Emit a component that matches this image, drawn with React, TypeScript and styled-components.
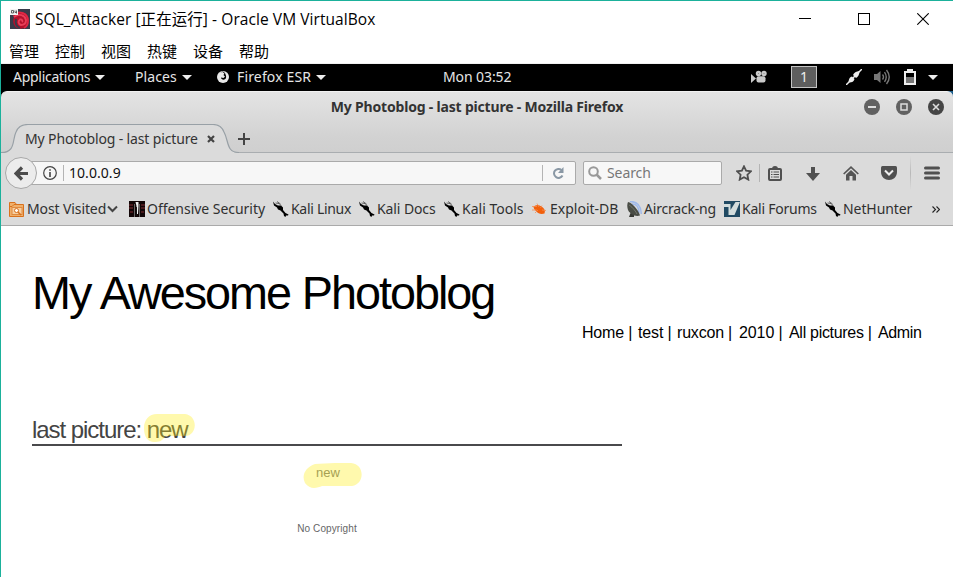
import React from "react";
import styled, { createGlobalStyle } from "styled-components";

const Global = createGlobalStyle`
  * { box-sizing: border-box; }
  html, body { margin: 0; padding: 0; background: #fff; overflow: hidden; }
  svg { display: block; flex: none; }
`;

const Window = styled.div`
  width: 953px;
  height: 577px;
  border-top: 1px solid #1bb19b;
  border-left: 1px solid #1bb19b;
  background: #fff;
  display: flex;
  flex-direction: column;
  overflow: hidden;
`;

const TitleBar = styled.header`
  height: 36px;
  flex: none;
  display: flex;
  align-items: center;
  padding: 0 24px 0 9px;
`;

const WindowTitle = styled.div`
  flex: 1;
  margin-left: 5px;
  font: 15.5px/20px "Open Sans", "Noto Sans CJK SC", sans-serif;
  letter-spacing: 0.07px;
  color: #000;
  white-space: nowrap;
`;

const WindowControls = styled.div`
  display: flex;
  gap: 46px;
`;

const MenuBar = styled.nav`
  height: 27px;
  flex: none;
  display: flex;
  align-items: center;
  padding: 2px 0 0 8px;
  gap: 16px;
  font: 15px/20px "Noto Sans CJK SC", sans-serif;
  color: #000;
  border-bottom: 1px solid #f0f0f0;
`;

const Panel = styled.div`
  height: 27px;
  flex: none;
  display: flex;
  align-items: center;
  padding-bottom: 1px;
  background: #000;
  color: #e6e6e6;
`;

const Label = styled.span<{ $w: number; $ls?: number; $ml?: number }>`
  flex: none;
  width: ${(p) => p.$w}px;
  margin-left: ${(p) => p.$ml ?? 0}px;
  font: 14px/20px "Noto Sans", sans-serif;
  letter-spacing: ${(p) => p.$ls ?? 0}px;
  white-space: nowrap;
`;

const Gap = styled.div<{ $w: number }>`
  flex: none;
  width: ${(p) => p.$w}px;
`;

const Workspace = styled.div`
  width: 26px;
  height: 22px;
  flex: none;
  border: 1px solid #c4c4c4;
  background: #5e5e5e;
  color: #eee;
  font: 14px/20px "Noto Sans", sans-serif;
  text-align: center;
`;

const BrowserShell = styled.div`
  flex: none;
  background: linear-gradient(90deg, #000 50%, #1d5f8c 50%);
`;

const BrowserTop = styled.div`
  height: 62px;
  display: flex;
  flex-direction: column;
  border-radius: 6px 6px 0 0;
  border-top: 1px solid #f2f2f2;
  background: linear-gradient(#e4e4e4, #d2d2d2 45px, #cfcfcf);
`;

const BrowserTitle = styled.div`
  height: 32px;
  display: grid;
  grid-template-columns: 90px 1fr 90px;
  align-items: center;
  padding: 0 9px 2px 0;
`;

const BrowserName = styled.div`
  grid-column: 2;
  text-align: center;
  font: bold 14px/20px "Noto Sans", sans-serif;
  letter-spacing: -0.19px;
  color: #333;
  white-space: nowrap;
  padding-left: 9px;
`;

const RoundButtons = styled.div`
  display: flex;
  justify-content: flex-end;
  gap: 16px;
`;

const TabStrip = styled.div`
  height: 29px;
  display: flex;
  align-items: center;
  border-bottom: 1px solid #a9adb0;
`;

const Tab = styled.div`
  position: relative;
  width: 236px;
  height: 29px;
  flex: none;
  display: flex;
  align-items: center;
  padding: 2px 0 0 24px;
  color: #333;
`;

const TabShape = styled.svg`
  position: absolute;
  left: 0;
  top: 0;
`;

const TabContent = styled.div`
  position: relative;
  display: flex;
  align-items: center;
`;

const NavBar = styled.div`
  height: 40px;
  display: flex;
  align-items: center;
  background: #dbdbdb;
  color: #111;
`;

const BackButton = styled.div`
  position: relative;
  width: 32px;
  height: 32px;
  flex: none;
  margin-left: 4px;
  border: 1px solid #a8a8a8;
  border-radius: 50%;
  background: #ececec;
  display: grid;
  place-items: center;
`;

const AddressBar = styled.div`
  height: 24px;
  width: 547px;
  flex: none;
  margin-left: -8px;
  padding-left: 13px;
  border: 1px solid #aaa;
  border-radius: 2px;
  background: #f7f7f7;
  display: flex;
  align-items: center;
`;

const SearchBox = styled.div`
  width: 139px;
  height: 24px;
  flex: none;
  margin-left: 7px;
  padding-left: 4px;
  border: 1px solid #aaa;
  border-radius: 2px;
  background: #f7f7f7;
  color: #777;
  display: flex;
  align-items: center;
`;

const Divider = styled.div<{ $h: number; $ml: number; $mr: number }>`
  flex: none;
  width: 1px;
  height: ${(p) => p.$h}px;
  margin: 0 ${(p) => p.$mr}px 0 ${(p) => p.$ml}px;
  background: #b4b4b4;
`;

const MenuDivider = styled.div`
  flex: none;
  width: 1px;
  height: 34px;
  margin: 0 13px;
  background: linear-gradient(#dbdbdb, #b8b8b8 50%, #dbdbdb);
`;

const Bookmarks = styled.div`
  height: 33px;
  display: flex;
  align-items: center;
  padding-left: 8px;
  background: #dbdbdb;
  border-bottom: 1px solid #aaa;
  color: #303030;
`;

const Bookmark = styled.div<{ $w: number }>`
  width: ${(p) => p.$w}px;
  flex: none;
  display: flex;
  align-items: center;
`;

const Page = styled.main`
  flex: 1;
  font-family: "Liberation Sans", Arial, sans-serif;
  padding: 38px 31px 0;
`;

const SiteTitle = styled.h1`
  margin: 0 0 1px;
  font-size: 46.8px;
  line-height: 58px;
  font-weight: 400;
  letter-spacing: -2.05px;
  word-spacing: 1px;
  color: #000;
  white-space: nowrap;
`;

const SiteNav = styled.nav`
  display: flex;
  justify-content: flex-end;
  font-size: 16px;
  line-height: 20px;
  color: #000;
`;

const SiteLink = styled.span<{ $w: number; $ls: number }>`
  width: ${(p) => p.$w}px;
  letter-spacing: ${(p) => p.$ls}px;
  white-space: nowrap;
`;

const Article = styled.section`
  width: 590px;
  margin-top: 72px;
  text-align: center;
`;

const Heading = styled.h2`
  margin: 0;
  height: 31px;
  border-bottom: 2px solid #4a4a4c;
  text-align: left;
  font-size: 24px;
  line-height: 29px;
  font-weight: 400;
  letter-spacing: -1.05px;
  color: #444;
  white-space: nowrap;
`;

const Marked = styled.span`
  position: relative;
  display: inline-block;
`;

const Marker = styled.svg<{ $x: number; $y: number }>`
  position: absolute;
  left: ${(p) => p.$x}px;
  top: ${(p) => p.$y}px;
  fill: #ffee11;
  opacity: 0.34;
`;

const Caption = styled.div`
  margin-top: 17px;
  padding-left: 2px;
  font-size: 13px;
  line-height: 20px;
  letter-spacing: 0.1px;
  color: #777;
`;

const Footer = styled.footer`
  margin-top: 36px;
  font-size: 10px;
  line-height: 20px;
  letter-spacing: 0.1px;
  color: #666;
`;

const Caret = () => (
  <svg width="10" height="5" viewBox="0 0 10 5"><path d="M0 0H10L5 5Z" fill="#eee" /></svg>
);

const VmIcon = () => (
  <svg width="20" height="20" viewBox="0 0 20 20">
    <rect width="20" height="20" fill="#383b4a" />
    <path d="M3 7C7 3 12 2 15 4C20 7 20 14 16 18C14 20 9 20 7 19C4 17 2 13 4 8Z" fill="#b3112c" />
    <path d="M4 8C9 4 15 6 16 11C16 14 14 16 11 16C8 15 8 12 10 10.500C12 10 13 12 12 13" fill="none" stroke="#e83e58" strokeWidth="1.900" />
    <path d="M3 6C9 1 18 4 18 12C18 15 16 18 14 19" fill="none" stroke="#df2745" strokeWidth="1.700" />
    <path d="M6 10C5 15 7 18 10 19" fill="none" stroke="#383b4a" strokeWidth="2" />
    <rect x="0" y="0" width="8" height="6" fill="#f4f4f4" />
    <path d="M1.500 1.500H3.500V4H1.500ZM5 1.500V3.500H7M6.500 1.500V4.500" fill="none" stroke="#555" strokeWidth=".9" />
  </svg>
);

const FirefoxIcon = () => (
  <svg width="12" height="12" viewBox="0 0 12 12">
    <circle cx="6" cy="6" r="6" fill="#e8e8e8" />
    <path d="M3 1.500L5.500 1L7.500 2.500L6.500 4L8 5.500L6.500 7L4 6.500C4 9 8 9.500 9 7C9.500 5 8.500 3.500 8 2L6 .6Z" fill="#000" />
  </svg>
);

const CameraIcon = () => (
  <svg width="16" height="14" viewBox="0 0 16 14" fill="#c9c9c9">
    <path d="M0 4L5 8.500L0 13Z" />
    <circle cx="7.500" cy="3.500" r="2.700" /><circle cx="13" cy="3.500" r="2.700" />
    <rect x="5.500" y="6.200" width="9" height="6.300" rx="2" />
    <circle cx="7.500" cy="3.500" r=".5" fill="#777" /><circle cx="13" cy="3.500" r=".5" fill="#777" />
  </svg>
);

const CableIcon = () => (
  <svg width="16" height="16" viewBox="0 0 16 16">
    <path d="M0 16L16 0" stroke="#eee" strokeWidth="1.500" />
    <path d="M2.500 12.500C3 9.500 4 8 6 7.500L8.500 10C8 12.500 6 13.500 3.500 13.500Z" fill="#eee" />
    <path d="M7 6C8 3.500 10 2.500 13.500 2C13.500 5.500 12 8 10 9Z" fill="#eee" />
  </svg>
);

const SoundIcon = () => (
  <svg width="17" height="16" viewBox="0 0 17 16">
    <path d="M0 5H3L6.500 2V14L3 11H0Z" fill="#777" />
    <path d="M8.500 5.500Q10.500 8 8.500 10.500M10.500 3.200Q14 8 10.500 12.800M12.500 1Q18 8 12.500 15" fill="none" stroke="#777" strokeWidth="1.400" />
  </svg>
);

const BatteryIcon = () => (
  <svg width="12" height="16" viewBox="0 0 12 16">
    <path d="M3 0H9V2H12V16H0V2H3Z" fill="#eee" />
    <rect x="2" y="4" width="8" height="4" fill="#000" />
    <rect x="2" y="8" width="8" height="6" fill="#777" />
  </svg>
);

const RoundIcon = ({ kind }: { kind: "min" | "max" | "close" }) => (
  <svg width="16" height="16" viewBox="0 0 16 16">
    <circle cx="8" cy="8" r="8" fill={kind === "close" ? "#454545" : "#616161"} />
    {kind === "min" && <rect x="4" y="7" width="8" height="2" fill="#ddd" />}
    {kind === "max" && <rect x="5" y="5" width="6" height="6" fill="none" stroke="#ddd" strokeWidth="1.500" />}
    {kind === "close" && <path d="M5 5L11 11M11 5L5 11" stroke="#ddd" strokeWidth="1.600" />}
  </svg>
);

const KaliIcon = () => (
  <svg width="16" height="16" viewBox="0 0 16 16">
    <path d="M0 .5L2 3L5 4.500L8 4.500L10 6.500L10 9L12.500 12L15.500 13.500L15 14.500L13 14.500L12.500 16L11 15L10.500 12.500L7.500 9.500L5 8.500L4 6.500L1 4.500Z" fill="#000" />
    <path d="M2.500 2L6 2.500L8 4.500M4 .5L7.500 3" fill="none" stroke="#333" strokeWidth=".7" />
  </svg>
);

const FolderIcon = () => (
  <svg width="15" height="16" viewBox="0 0 15 16">
    <path d="M.5 1.500H6L7.500 3.500H14.500V15.500H.5Z" fill="#efb06c" stroke="#d9711c" />
    <path d="M1 5.500H3L5 3.500H14" fill="none" stroke="#d9711c" />
    <rect x="3" y="6.500" width="10" height="7" fill="#f6cfa2" stroke="#e08a40" />
    <circle cx="7.500" cy="9.500" r="2" fill="#fff" stroke="#d9711c" />
    <path d="M9 11L12 14" stroke="#d9711c" strokeWidth="1.500" />
  </svg>
);

const OffsecIcon = () => (
  <svg width="16" height="16" viewBox="0 0 16 16">
    <rect width="16" height="16" fill="#120607" />
    <path d="M0 4H4M0 7H4M1 11H4M12 4H16M12 7H16M12 11H15" stroke="#5c2024" strokeWidth="1.400" />
    <path d="M5.500 16V3M10.500 3V16" stroke="#666" strokeWidth="1" />
    <path d="M6.500 1H9.500V5L9 13H7L7.500 5Z" fill="#f2f2f2" />
    <path d="M7 6H8V15H7Z" fill="#111" />
  </svg>
);

const BugIcon = () => (
  <svg width="14" height="14" viewBox="0 0 14 14">
    <path d="M1.500 4.500C4 2.500 7 2.500 9.500 4.500C12.500 6 13.500 9 12.500 11.500C9 12.500 6 11.500 4.500 9.500C2.500 8 1.500 6 1.500 4.500Z" fill="#f2600c" />
    <path d="M0 4.500H5M0 8H5M3 11L6 8M5 1.500L7 5M10 3.500L8.500 6M14 8.500L10 8" stroke="#f58d50" strokeWidth=".8" />
  </svg>
);

const DishIcon = () => (
  <svg width="15" height="16" viewBox="0 0 15 16">
    <path d="M3 .7C10 0 14 5 14.300 13M5 3C10 3 12 7 12 12" fill="none" stroke="#9fb9ea" strokeWidth="1.500" />
    <path d="M1 1C5 2 11 8 13 14.500C8 16 3 13 1 9C0 6 0 3 1 1Z" fill="#4a4d46" />
    <path d="M2 4C4 5 8 9 10 13" fill="none" stroke="#777a70" />
    <path d="M3.500 12L2 16H7L7 14Z" fill="#383a35" />
  </svg>
);

const ForumIcon = () => (
  <svg width="16" height="16" viewBox="0 0 16 16">
    <rect width="16" height="16" fill="#214a63" />
    <path d="M0 3H6.500V9L11.500 1H16L10.500 14H4.500V6H0Z" fill="#d3dddd" />
  </svg>
);

type Mark = { text: string; icon: React.ReactNode; w: number; textW: number; ls: number; ml: number; folder?: boolean };

const marks: Mark[] = [
  { text: "Most Visited", icon: <FolderIcon />, w: 120, textW: 80, ls: -0.11, ml: 3, folder: true },
  { text: "Offensive Security", icon: <OffsecIcon />, w: 144, textW: 120, ls: -0.03, ml: 2 },
  { text: "Kali Linux", icon: <KaliIcon />, w: 86, textW: 62, ls: -0.3, ml: 2 },
  { text: "Kali Docs", icon: <KaliIcon />, w: 85, textW: 60, ls: -0.1, ml: 2 },
  { text: "Kali Tools", icon: <KaliIcon />, w: 88, textW: 63, ls: 0, ml: 2 },
  { text: "Exploit-DB", icon: <BugIcon />, w: 95, textW: 70, ls: 0, ml: 4 },
  { text: "Aircrack-ng", icon: <DishIcon />, w: 97, textW: 74, ls: -0.2, ml: 2 },
  { text: "Kali Forums", icon: <ForumIcon />, w: 101, textW: 76, ls: -0.23, ml: 2 },
  { text: "NetHunter", icon: <KaliIcon />, w: 106, textW: 72, ls: -0.08, ml: 2 },
];

const links = [
  { text: "Home |", w: 56, ls: -0.2 },
  { text: "test |", w: 39, ls: -0.15 },
  { text: "ruxcon |", w: 62, ls: -0.2 },
  { text: "2010 |", w: 50, ls: -0.1 },
  { text: "All pictures |", w: 89, ls: -0.3 },
  { text: "Admin", w: 44, ls: -0.35 },
];

export default function App() {
  return (
    <>
      <Global />
      <Window>
        <TitleBar>
          <VmIcon />
          <WindowTitle>SQL_Attacker [正在运行] - Oracle VM VirtualBox</WindowTitle>
          <WindowControls>
            <svg width="13" height="12"><path d="M0 5.500H12" stroke="#000" /></svg>
            <svg width="13" height="12"><rect x=".5" y=".5" width="11" height="11" fill="none" stroke="#000" /></svg>
            <svg width="12" height="12"><path d="M.3 .3L11.700 11.700M11.700 .3L.3 11.700" stroke="#000" strokeWidth="1.100" /></svg>
          </WindowControls>
        </TitleBar>
        <MenuBar>
          {["管理", "控制", "视图", "热键", "设备", "帮助"].map((m) => <span key={m}>{m}</span>)}
        </MenuBar>
        <Panel>
          <Label $ml={12} $w={82} $ls={-0.27}>Applications</Label><Caret />
          <Label $ml={30} $w={47} $ls={0.1}>Places</Label><Caret />
          <Gap $w={25} /><FirefoxIcon />
          <Label $ml={8} $w={79} $ls={0.15}>Firefox ESR</Label><Caret />
          <Label $ml={117} $w={308} $ls={-0.1}>Mon 03:52</Label>
          <CameraIcon /><Gap $w={24} />
          <Workspace>1</Workspace><Gap $w={29} />
          <CableIcon /><Gap $w={12} />
          <SoundIcon /><Gap $w={13} />
          <BatteryIcon /><Gap $w={12} /><Caret />
        </Panel>
        <BrowserShell>
          <BrowserTop>
            <BrowserTitle>
              <BrowserName>My Photoblog - last picture - Mozilla Firefox</BrowserName>
              <RoundButtons>
                <RoundIcon kind="min" /><RoundIcon kind="max" /><RoundIcon kind="close" />
              </RoundButtons>
            </BrowserTitle>
            <TabStrip>
              <Tab>
                <TabShape width="238" height="30" viewBox="0 0 238 30">
                  <path d="M0 29C15 29 11 16 15 8Q18 1 27 1H212Q220 1 223 8C228 17 225 29 238 29V30H0Z" fill="#dbdbdb" />
                  <path d="M0 28.500C15 28.500 11 16 15 8Q18 .5 27 .5H212Q220 .5 223 8C228 17 225 28.500 238 28.500" fill="none" stroke="#98a0a6" strokeWidth="1.200" />
                </TabShape>
                <TabContent>
                  <Label $w={182} $ls={-0.14}>My Photoblog - last picture</Label>
                  <svg width="8" height="8"><path d="M1 1L7 7M7 1L1 7" stroke="#444" strokeWidth="2.200" /></svg>
                </TabContent>
              </Tab>
              <svg width="14" height="16"><path d="M1 9H13M7 3V15" stroke="#444" strokeWidth="2" /></svg>
            </TabStrip>
          </BrowserTop>
          <NavBar>
            <BackButton>
              <svg width="14" height="15"><path d="M8 1.500L2 7.500L8 13.500M3 7.500H14" fill="none" stroke="#4c4c4c" strokeWidth="3.200" /></svg>
            </BackButton>
            <AddressBar>
              <svg width="14" height="14"><circle cx="7" cy="7" r="6.300" fill="none" stroke="#444" strokeWidth="1.200" /><path d="M7 6V11M7 3.200V4.800" stroke="#444" strokeWidth="1.600" /></svg>
              <Divider $h={16} $ml={6} $mr={5} />
              <Label $w={473} $ls={0.05}>10.0.0.9</Label>
              <Divider $h={16} $ml={0} $mr={9} />
              <svg width="12" height="12" viewBox="0 0 12 12"><path d="M9.500 3A4.500 4.500 0 1 0 10.500 8.500" fill="none" stroke="#8a98a5" strokeWidth="2" /><path d="M11.500 0V6H6Z" fill="#8a98a5" /></svg>
            </AddressBar>
            <SearchBox>
              <svg width="14" height="14"><circle cx="5.500" cy="5.500" r="4.300" fill="none" stroke="#999" strokeWidth="2" /><path d="M8.500 8.500L13 13" stroke="#999" strokeWidth="2.500" /></svg>
              <Label $ml={5} $w={60} $ls={-0.1}>Search</Label>
            </SearchBox>
            <Gap $w={14} />
            <svg width="16" height="16" viewBox="0 0 16 16"><path d="M8 1.300L10.100 5.700L15 6.300L11.400 9.700L12.300 14.600L8 12.200L3.700 14.600L4.600 9.700L1 6.300L5.900 5.700Z" fill="none" stroke="#505050" strokeWidth="1.800" /></svg>
            <Divider $h={18} $ml={7} $mr={8} />
            <svg width="14" height="15" viewBox="0 0 14 15"><rect x="1" y="3" width="12" height="11" rx="1" fill="none" stroke="#505050" strokeWidth="2" /><path d="M4 3Q4 0 7 0Q10 0 10 3Z" fill="#505050" /><path d="M3 6H4.500M5.500 6H11M3 8.500H4.500M5.500 8.500H11M3 11H4.500M5.500 11H11" stroke="#505050" strokeWidth="1.200" /></svg>
            <Gap $w={24} />
            <svg width="14" height="15" viewBox="0 0 14 15"><path d="M5 1H9V7H14L7 15L0 7H5Z" fill="#505050" /></svg>
            <Gap $w={23} />
            <svg width="16" height="15" viewBox="0 0 16 15"><path d="M.7 8L8 1.200L15.300 8" fill="none" stroke="#555" strokeWidth="1.700" /><path d="M8 4L13 8.700V14.500H9.500V10H6.500V14.500H3V8.700Z" fill="#555" /></svg>
            <Gap $w={22} />
            <svg width="16" height="14" viewBox="0 0 16 14"><path d="M1.500 0H14.500Q16 0 16 1.500V6C16 11 12 14 8 14S0 11 0 6V1.500Q0 0 1.500 0Z" fill="#505050" /><path d="M4 4.500L8 8.500L12 4.500" fill="none" stroke="#eee" strokeWidth="2" /></svg>
            <MenuDivider />
            <svg width="16" height="15"><path d="M1.500 2H14.500M1.500 7H14.500M1.500 12H14.500" stroke="#505050" strokeWidth="3" strokeLinecap="round" /></svg>
          </NavBar>
          <Bookmarks>
            {marks.map((m) => (
              <Bookmark key={m.text} $w={m.w}>
                {m.icon}
                <Label $ml={m.ml} $w={m.textW} $ls={m.ls}>{m.text}</Label>
                {m.folder && <svg width="11" height="8"><path d="M1 1.500L5.500 6L10 1.500" fill="none" stroke="#444" strokeWidth="2" /></svg>}
              </Bookmark>
            ))}
            <svg width="9" height="7"><path d="M1.500 .5L4.500 3.500L1.500 6.500M5.500 .5L8.500 3.500L5.500 6.500" fill="none" stroke="#222" strokeWidth="1.100" /></svg>
          </Bookmarks>
        </BrowserShell>
        <Page>
          <SiteTitle>My Awesome Photoblog</SiteTitle>
          <SiteNav>{links.map((l) => <SiteLink key={l.text} $w={l.w} $ls={l.ls}>{l.text}</SiteLink>)}</SiteNav>
          <Article>
            <Heading>
              last picture:{" "}
              <Marked>
                new
                <Marker $x={-3} $y={-1} width="52" height="30" viewBox="0 0 52 30"><path d="M13 0H41C55 2 53 22 41 22H21C19 27 15 28 10 28C4 28 0 23 0 14C0 6 5 0 13 0Z" /></Marker>
              </Marked>
            </Heading>
            <Caption>
              <Marked>
                new
                <Marker $x={-13} $y={0} width="60" height="26" viewBox="0 0 60 26"><path d="M12 1L32 0H48C62 1 62 21 49 23H19C14 25 7 27 2 20C-2 12 3 4 12 1Z" /></Marker>
              </Marked>
            </Caption>
            <Footer>No Copyright</Footer>
          </Article>
        </Page>
      </Window>
    </>
  );
}
